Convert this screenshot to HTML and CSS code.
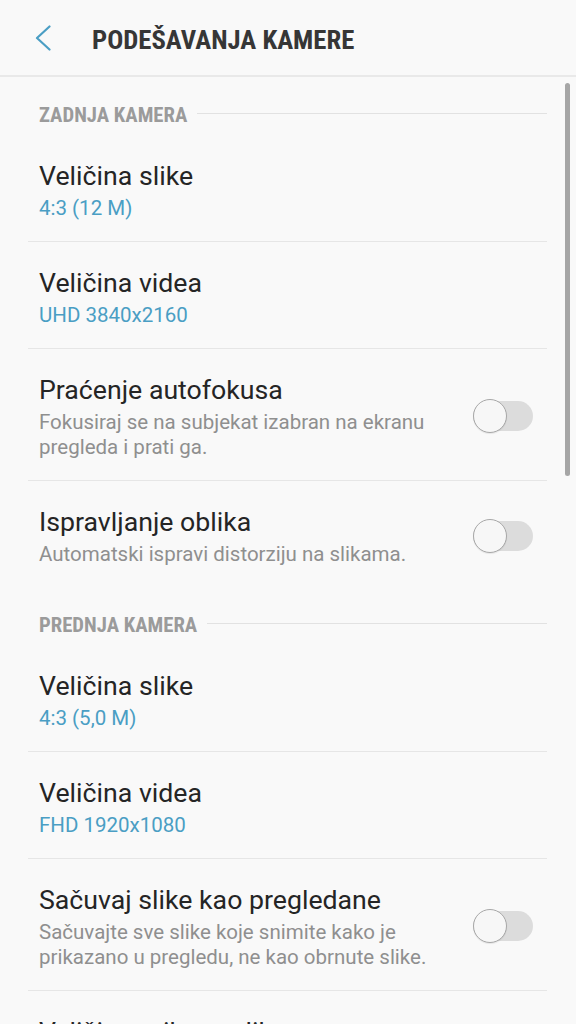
FILE: index.html
```html
<!DOCTYPE html>
<html lang="sr">
<head>
<meta charset="utf-8">
<title>Podešavanja kamere</title>
<link rel="stylesheet" href="styles.css">
</head>
<body>
<div class="screen">
  <header class="topbar">
    <svg class="back" width="16" height="26" viewBox="0 0 16 26"><polyline points="14.5,1.5 2,13 14.5,24.5" fill="none" stroke="#4a9ec4" stroke-width="2.2" stroke-linecap="round" stroke-linejoin="round"/></svg>
    <h1 class="title">PODEŠAVANJA KAMERE</h1>
  </header>
  <div class="list">
    <div class="section"><span class="section-label">ZADNJA KAMERA</span><span class="section-line"></span></div>
    <div class="item">
      <div class="text"><div class="item-title">Veličina slike</div><div class="item-value">4:3 (12 M)</div></div>
    </div>
    <div class="item">
      <div class="text"><div class="item-title">Veličina videa</div><div class="item-value">UHD 3840x2160</div></div>
    </div>
    <div class="item">
      <div class="text"><div class="item-title">Praćenje autofokusa</div><div class="item-desc">Fokusiraj se na subjekat izabran na ekranu pregleda i prati ga.</div></div>
      <div class="toggle"><span class="track"></span><span class="knob"></span></div>
    </div>
    <div class="item last">
      <div class="text"><div class="item-title">Ispravljanje oblika</div><div class="item-desc">Automatski ispravi distorziju na slikama.</div></div>
      <div class="toggle"><span class="track"></span><span class="knob"></span></div>
    </div>
    <div class="section"><span class="section-label">PREDNJA KAMERA</span><span class="section-line"></span></div>
    <div class="item">
      <div class="text"><div class="item-title">Veličina slike</div><div class="item-value">4:3 (5,0 M)</div></div>
    </div>
    <div class="item">
      <div class="text"><div class="item-title">Veličina videa</div><div class="item-value">FHD 1920x1080</div></div>
    </div>
    <div class="item">
      <div class="text"><div class="item-title">Sačuvaj slike kao pregledane</div><div class="item-desc">Sačuvajte sve slike koje snimite kako je prikazano u pregledu, ne kao obrnute slike.</div></div>
      <div class="toggle"><span class="track"></span><span class="knob"></span></div>
    </div>
    <div class="item last">
      <div class="text"><div class="item-title">Veličina prikaza slike</div><div class="item-value">16:9</div></div>
    </div>
  </div>
  <div class="scrollbar"></div>
</div>
</body>
</html>
```
FILE: styles.css
```css
* { box-sizing: border-box; }
html, body { margin: 0; padding: 0; }
body {
  background: #f9f9f9;
  font-family: Roboto, "Noto Sans", "Liberation Sans", sans-serif;
  width: 576px;
  height: 1024px;
  overflow: hidden;
}
.screen { position: relative; height: 1024px; overflow: hidden; }
.topbar {
  height: 77px;
  padding: 5px 0 0 35px;
  display: flex;
  align-items: center;
  border-bottom: 2px solid #e9e9e9;
}
.back { display: block; margin-bottom: 4px; flex: none; }
.title {
  margin: 0 0 0 41px;
  font-family: "Roboto Condensed", "Liberation Sans Narrow", "DejaVu Sans Condensed", sans-serif;
  font-weight: 700;
  font-size: 26.7px;
  line-height: 30px;
  color: #363636;
}
.list { padding: 0 29px 0 28px; }
.section {
  height: 58px;
  padding: 27px 0 9px 11px;
  display: flex;
  align-items: center;
}
.section-label {
  font-family: "Roboto Condensed", "Liberation Sans Narrow", "DejaVu Sans Condensed", sans-serif;
  font-weight: 700;
  font-size: 20.7px;
  line-height: 22px;
  color: #9b9b9b;
  white-space: nowrap;
}
.section-line {
  flex: 1;
  height: 1px;
  background: #e2e2e2;
  margin: 0 0 3px 10px;
}
.item {
  display: flex;
  align-items: center;
  padding: 25px 14px 20px 11px;
  border-bottom: 1px solid #e6e6e6;
}
.item.last { border-bottom: none; }
.text { flex: 1; min-width: 0; padding-right: 20px; }
.item-title {
  font-size: 26.7px;
  line-height: 32px;
  color: #252525;
}
.item-value, .item-desc {
  margin-top: 4px;
  font-size: 20.5px;
  line-height: 25px;
}
.item-value { color: #4a9ec4; }
.item-desc { color: #8f8f8f; }
.toggle {
  position: relative;
  width: 60px;
  height: 34px;
  flex: none;
  margin-top: -2px;
}
.track {
  position: absolute;
  left: 0; right: 0; top: 2px;
  height: 30px;
  border-radius: 15px;
  background: #dcdcdc;
}
.knob {
  position: absolute;
  left: 0; top: 0;
  width: 34px; height: 34px;
  border-radius: 50%;
  background: #f7f7f7;
  border: 1px solid #a8a8a8;
  box-shadow: 0 1px 1px rgba(0,0,0,0.08);
}
.scrollbar {
  position: absolute;
  left: 565px;
  top: 83px;
  width: 5px;
  height: 393px;
  border-radius: 3px;
  background: #a6a6a6;
}
```
